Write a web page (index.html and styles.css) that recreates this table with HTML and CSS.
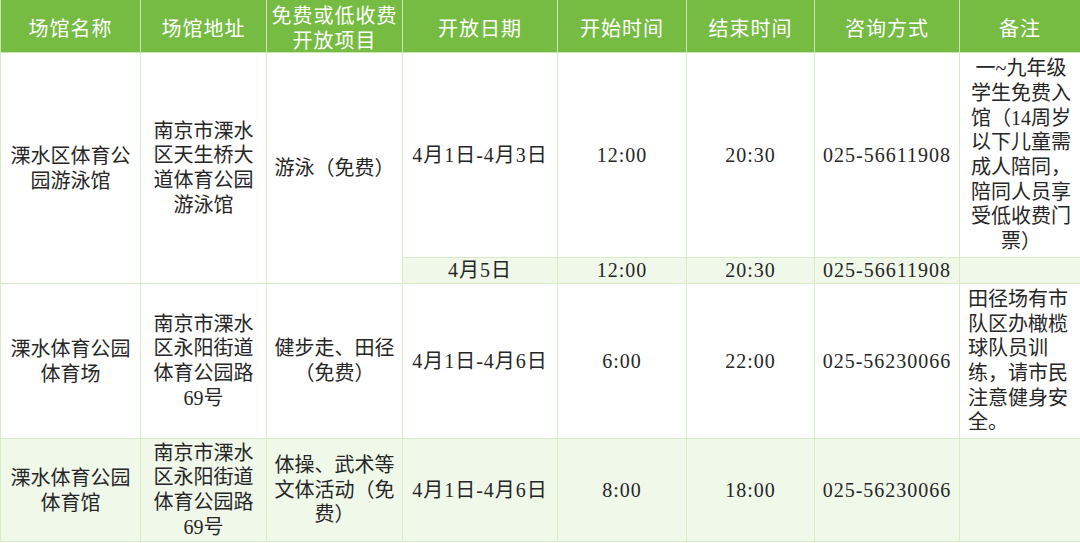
FILE: index.html
```html
<!DOCTYPE html>
<html lang="zh-CN">
<head>
<meta charset="utf-8">
<title>场馆开放表</title>
<link rel="stylesheet" href="styles.css">
</head>
<body>
<table class="schedule">
  <colgroup>
    <col class="c1"><col class="c2"><col class="c3"><col class="c4">
    <col class="c5"><col class="c6"><col class="c7"><col class="c8">
  </colgroup>
  <thead>
    <tr class="head">
      <th>场馆名称</th>
      <th>场馆地址</th>
      <th>免费或低收费<br>开放项目</th>
      <th>开放日期</th>
      <th>开始时间</th>
      <th>结束时间</th>
      <th>咨询方式</th>
      <th>备注</th>
    </tr>
  </thead>
  <tbody>
    <tr class="r1">
      <td rowspan="2">溧水区体育公园游泳馆</td>
      <td rowspan="2">南京市溧水区天生桥大道体育公园游泳馆</td>
      <td rowspan="2">游泳（免费）</td>
      <td class="num">4月1日-4月3日</td>
      <td class="num">12:00</td>
      <td class="num">20:30</td>
      <td class="num">025-56611908</td>
      <td class="note">一~九年级学生免费入馆（14周岁以下儿童需成人陪同，陪同人员享受低收费门票）</td>
    </tr>
    <tr class="r1b tint">
      <td class="num">4月5日</td>
      <td class="num">12:00</td>
      <td class="num">20:30</td>
      <td class="num">025-56611908</td>
      <td></td>
    </tr>
    <tr class="r2">
      <td>溧水体育公园体育场</td>
      <td>南京市溧水区永阳街道体育公园路69号</td>
      <td>健步走、田径（免费）</td>
      <td class="num">4月1日-4月6日</td>
      <td class="num">6:00</td>
      <td class="num">22:00</td>
      <td class="num">025-56230066</td>
      <td class="note left">田径场有市队区办橄榄球队员训练，请市民注意健身安全。</td>
    </tr>
    <tr class="r3 tint">
      <td>溧水体育公园体育馆</td>
      <td>南京市溧水区永阳街道体育公园路69号</td>
      <td>体操、武术等文体活动（免费）</td>
      <td class="num">4月1日-4月6日</td>
      <td class="num">8:00</td>
      <td class="num">18:00</td>
      <td class="num">025-56230066</td>
      <td></td>
    </tr>
  </tbody>
</table>
</body>
</html>
```
FILE: styles.css
```css
html, body {
  margin: 0;
  padding: 0;
  background: #ffffff;
}

.schedule {
  width: 1080px;
  table-layout: fixed;
  border-collapse: collapse;
  font-family: "Liberation Serif", "Noto Sans CJK SC", serif;
  font-size: 20px;
  line-height: 24.7px;
  color: #262626;
  border-left: 1px solid #8fcf6a;
  border-bottom: 1px solid #a9da86;
}

.c1 { width: 140px; }
.c2 { width: 126px; }
.c3 { width: 136px; }
.c4 { width: 155px; }
.c5 { width: 129px; }
.c6 { width: 128px; }
.c7 { width: 145px; }
.c8 { width: 121px; }

.schedule th,
.schedule td {
  border: 1px solid #d6edc6;
  padding: 0 6px;
  text-align: center;
  vertical-align: middle;
}

.schedule .head th {
  background: #76bc43;
  color: #ffffff;
  font-weight: normal;
  font-family: "Noto Sans CJK SC", sans-serif;
  letter-spacing: 1px;
  line-height: 25px;
  height: 50px;
  padding: 2px 4px 0;
  border-top: none;
  border-color: #c9e6b3;
}

.schedule td:first-child {
  padding: 2px 9px 0;
}

.r1 { height: 205px; }
.r1b { height: 26px; }
.r2 { height: 155px; }
.r3 { height: 103px; }

.schedule .tint td {
  background: #f0f8ea;
}

.schedule td.num {
  letter-spacing: 1px;
  padding: 0 2px;
}

.schedule td.note {
  padding: 0 4px 0 6px;
}

.schedule td.left {
  text-align: left;
  padding-left: 8px;
}
```
